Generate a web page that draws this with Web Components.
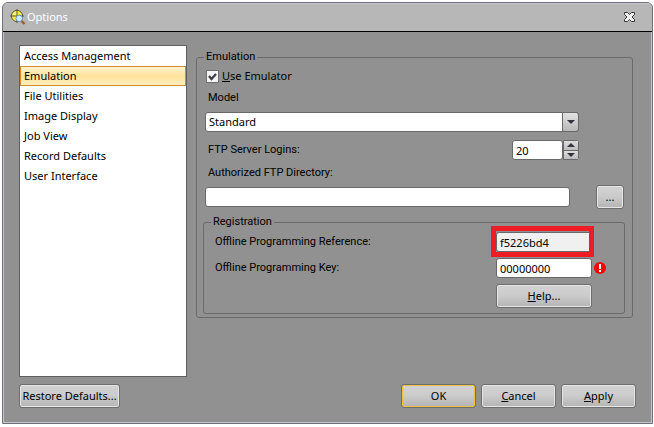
<!DOCTYPE html>
<html lang="en">
<head>
<meta charset="utf-8">
<title>Options</title>
<style>
    body {
        margin: 0;
        background: #fff;
        color: #000;
        font: 11px/16px "Noto Sans", "Open Sans", sans-serif;
    }
</style>
</head>
<body>
<options-dialog></options-dialog>

<script>
const baseStyle = `
    * {
        box-sizing: border-box;
        margin: 0;
    }
    input, select, button {
        font: inherit;
        color: inherit;
    }
    .caption {
        font-family: Roboto, "Liberation Sans", sans-serif;
    }
    .box {
        height: 20px;
        min-width: 0;
        padding: 0 3px;
        border: 1px solid #686868;
        border-radius: 3px;
        background: #fff;
        outline: none;
    }
`;

class ActionButton extends HTMLElement {
    constructor() {
        super();
        this.attachShadow({mode: "open"}).innerHTML = `
            <style>
                ${baseStyle}
                :host {
                    display: block;
                    width: 75px;
                }
                button {
                    display: block;
                    width: 100%;
                    height: 24px;
                    padding: 0;
                    border: 1px solid #6e6e6e;
                    border-radius: 3px;
                    background: linear-gradient(#d2d2d2, #cccccc 45%, #b4b4b4);
                    box-shadow: inset 0 0 0 1px #e6e6e6;
                    white-space: nowrap;
                }
                :host([default]) button {
                    box-shadow: inset 0 0 0 1px #f0c040;
                }
            </style>
            <button type="button"><slot></slot></button>`;
    }
}
customElements.define("action-button", ActionButton);

class GroupBox extends HTMLElement {
    constructor() {
        super();
        this.attachShadow({mode: "open"}).innerHTML = `
            <style>
                ${baseStyle}
                :host {
                    display: block;
                }
                fieldset {
                    min-width: 0;
                    padding: 0;
                    border: 1px solid #6a6a6a;
                    border-radius: 3px;
                }
                legend {
                    margin-left: 7px;
                    padding: 0 2px;
                }
            </style>
            <fieldset>
                <legend class="caption">${this.getAttribute("label")}</legend>
                <slot></slot>
            </fieldset>`;
    }
}
customElements.define("group-box", GroupBox);

class NavList extends HTMLElement {
    constructor() {
        super();
        const current = this.getAttribute("current");
        const items = this.getAttribute("items").split(",");
        this.attachShadow({mode: "open"}).innerHTML = `
            <style>
                ${baseStyle}
                :host {
                    display: block;
                    box-sizing: border-box;
                    border: 1px solid #5f5f5f;
                    background: #fff;
                }
                button {
                    display: block;
                    width: 100%;
                    height: 20px;
                    padding: 0 3px;
                    border: 1px solid transparent;
                    background: none;
                    text-align: left;
                }
                button[aria-current] {
                    border-color: #d68a2e;
                    background: linear-gradient(#fff3d0, #ffe29a 50%, #ffefbe);
                }
            </style>
            <nav>
                ${items.map(item => `<button type="button" ${item === current ? 'aria-current="true"' : ""}>${item}</button>`).join("")}
            </nav>`;
    }
}
customElements.define("nav-list", NavList);

class CheckField extends HTMLElement {
    constructor() {
        super();
        this.attachShadow({mode: "open"}).innerHTML = `
            <style>
                ${baseStyle}
                :host {
                    display: block;
                }
                label {
                    display: flex;
                    align-items: center;
                    gap: 3px;
                }
                input {
                    appearance: none;
                    width: 13px;
                    height: 13px;
                    border: 1px solid #707070;
                    background: #f4f4f4;
                }
                .tick {
                    display: grid;
                }
                .tick > * {
                    grid-area: 1 / 1;
                }
                svg {
                    pointer-events: none;
                }
                input:not(:checked) + svg {
                    display: none;
                }
            </style>
            <label>
                <span class="tick">
                    <input type="checkbox" checked>
                    <svg width="13" height="13" viewBox="0 0 13 13"><path d="M3 6 L5.5 9 L10 4" fill="none" stroke="#3c3c44" stroke-width="2.2"/></svg>
                </span>
                <span><slot></slot></span>
            </label>`;
    }
}
customElements.define("check-field", CheckField);

class ModelField extends HTMLElement {
    constructor() {
        super();
        this.attachShadow({mode: "open"}).innerHTML = `
            <style>
                ${baseStyle}
                :host {
                    display: block;
                }
                label {
                    display: block;
                    padding-left: 3px;
                    margin-bottom: 6px;
                }
                .combo {
                    display: grid;
                    grid-template-columns: 1fr 17px;
                }
                select {
                    grid-area: 1 / 1 / 2 / 3;
                    appearance: none;
                    width: 100%;
                }
                .arrow {
                    grid-area: 1 / 2;
                    display: flex;
                    align-items: center;
                    justify-content: center;
                    border: 1px solid #686868;
                    border-radius: 0 3px 3px 0;
                    background: linear-gradient(#e2e2e2, #b8b8b8);
                    pointer-events: none;
                }
            </style>
            <label class="caption" for="model">Model</label>
            <div class="combo">
                <select class="box" id="model"><option>Standard</option></select>
                <span class="arrow"><svg width="8" height="4"><path d="M0 0H8L4 4Z" fill="#33333b"/></svg></span>
            </div>`;
    }
}
customElements.define("model-field", ModelField);

class SpinField extends HTMLElement {
    constructor() {
        super();
        this.attachShadow({mode: "open"}).innerHTML = `
            <style>
                ${baseStyle}
                :host {
                    display: flex;
                    align-items: center;
                    justify-content: space-between;
                    padding-left: 3px;
                }
                .spin {
                    display: flex;
                    width: 67px;
                    height: 20px;
                }
                input {
                    flex: 1;
                    border-radius: 3px 0 0 3px;
                    border-right: 0;
                }
                .steps {
                    display: flex;
                    flex-direction: column;
                    width: 16px;
                    border: 1px solid #686868;
                    border-radius: 0 3px 3px 0;
                    background: #686868;
                    gap: 1px;
                }
                button {
                    flex: 1;
                    display: flex;
                    align-items: center;
                    justify-content: center;
                    min-height: 0;
                    padding: 0;
                    border: 0;
                    background: linear-gradient(#dedede, #bcbcbc);
                }
            </style>
            <label class="caption" for="logins">FTP Server Logins:</label>
            <div class="spin">
                <input class="box" id="logins" type="text" inputmode="numeric" value="20">
                <div class="steps">
                    <button type="button" aria-label="More"><svg width="8" height="4"><path d="M0 4H8L4 0Z" fill="#33333b"/></svg></button>
                    <button type="button" aria-label="Less"><svg width="8" height="4"><path d="M0 0H8L4 4Z" fill="#33333b"/></svg></button>
                </div>
            </div>`;
        const input = this.shadowRoot.querySelector("input");
        const [more, less] = this.shadowRoot.querySelectorAll("button");
        more.addEventListener("click", () => input.value = Number(input.value) + 1);
        less.addEventListener("click", () => input.value = Math.max(0, Number(input.value) - 1));
    }
}
customElements.define("spin-field", SpinField);

class PathField extends HTMLElement {
    constructor() {
        super();
        this.attachShadow({mode: "open"}).innerHTML = `
            <style>
                ${baseStyle}
                :host {
                    display: block;
                }
                label {
                    display: block;
                    padding-left: 3px;
                    margin-bottom: 4px;
                }
                .row {
                    display: flex;
                    align-items: center;
                    gap: 26px;
                }
                input {
                    flex: 1;
                }
                action-button {
                    width: 28px;
                }
            </style>
            <label class="caption" for="path">Authorized FTP Directory:</label>
            <div class="row">
                <input class="box" id="path" type="text">
                <action-button>...</action-button>
            </div>`;
    }
}
customElements.define("path-field", PathField);

class CodeField extends HTMLElement {
    constructor() {
        super();
        this.attachShadow({mode: "open"}).innerHTML = `
            <style>
                ${baseStyle}
                :host {
                    display: flex;
                    align-items: center;
                    justify-content: space-between;
                }
                .value {
                    position: relative;
                    width: 96px;
                }
                input {
                    display: block;
                    width: 100%;
                    padding: 0 2px;
                    border-color: #b4b4b4;
                    border-radius: 2px;
                }
                input[readonly] {
                    background: #f0f0f0;
                }
                /* frame around the marked value, drawn over its edges */
                :host([marked]) .value::after {
                    content: "";
                    position: absolute;
                    inset: -6px -2px -5px -5px;
                    border: 5px solid #ee1c25;
                    pointer-events: none;
                }
                svg {
                    position: absolute;
                    left: 98px;
                    top: 4px;
                }
                :host(:not([invalid])) svg {
                    display: none;
                }
            </style>
            <label class="caption" for="code">${this.getAttribute("label")}</label>
            <div class="value">
                <input class="box" id="code" type="text" value="${this.getAttribute("value")}" ${this.hasAttribute("marked") ? "readonly" : ""}>
                <svg width="12" height="12" viewBox="0 0 12 12">
                    <circle cx="6" cy="6" r="6" fill="#f00"/>
                    <path d="M5 2H7V7H5ZM5 8H7V10H5Z" fill="#fff"/>
                </svg>
            </div>`;
    }
}
customElements.define("code-field", CodeField);

class TitleBar extends HTMLElement {
    constructor() {
        super();
        this.attachShadow({mode: "open"}).innerHTML = `
            <style>
                ${baseStyle}
                :host {
                    box-sizing: border-box;
                    display: flex;
                    align-items: center;
                    height: 29px;
                    padding: 0 17px 0 7px;
                    border-bottom: 1px solid #000;
                    background: #b7b7b7;
                    box-shadow: inset 0 1px #c4c4cc;
                    color: #fff;
                }
                h1 {
                    flex: 1;
                    margin-left: 1px;
                    font: inherit;
                }
                svg {
                    display: block;
                }
                button {
                    padding: 0;
                    border: 0;
                    background: none;
                }
            </style>
            <svg width="16" height="16" viewBox="0 0 16 16">
                <circle cx="7" cy="7" r="5.6" fill="#ffee38" stroke="#5c5a3c"/>
                <path d="M7 0V14M0 7H14" stroke="#5c5a3c"/>
                <path d="M3.5 5.5L5.5 3.5M9 4L10.5 5" stroke="#fffbc0" stroke-width="1.5"/>
                <path d="M11.5 12L14.5 15" stroke="#a0582c" stroke-width="2.4"/>
                <circle cx="9.2" cy="9.4" r="3.3" fill="#c8ecff" stroke="#6b87b0"/>
            </svg>
            <h1>Options</h1>
            <button type="button" aria-label="Close">
                <svg width="11" height="10" viewBox="0 0 11 10">
                    <path d="M.5 .5H3.5L5.5 2.5L7.5 .5H10.5V2.5L8 5L10.5 7.5V9.5H7.5L5.5 7.5L3.5 9.5H.5V7.5L3 5L.5 2.5Z" fill="#f2f2f2" stroke="#3a3a3a"/>
                </svg>
            </button>`;
    }
}
customElements.define("title-bar", TitleBar);

class OptionsDialog extends HTMLElement {
    constructor() {
        super();
        this.attachShadow({mode: "open"}).innerHTML = `
            <style>
                ${baseStyle}
                :host {
                    box-sizing: border-box;
                    display: flex;
                    min-height: 100vh;
                    padding: 2px 1px 3px 2px;
                }
                .window {
                    flex: 1;
                    display: flex;
                    flex-direction: column;
                    border: 1px solid #70707c;
                    border-radius: 6px 6px 0 0;
                    background: #919191;
                    box-shadow: inset 0 0 0 1px #c4c4cc;
                    overflow: hidden;
                }
                form {
                    flex: 1;
                    display: flex;
                    flex-direction: column;
                    gap: 7px;
                    padding: 13px 16px 15px;
                }
                .main {
                    flex: 1;
                    display: flex;
                    gap: 9px;
                }
                nav-list {
                    width: 168px;
                }
                .settings {
                    flex: 1;
                    margin: 4px 3px 0 0;
                }
                .fields {
                    display: flex;
                    flex-direction: column;
                    padding: 3px 7px 3px 6px;
                }
                check-field {
                    margin: 0 3px 6px;
                }
                model-field, spin-field {
                    margin: 0 46px 8px 2px;
                }
                spin-field {
                    margin-bottom: 5px;
                }
                path-field {
                    margin: 0 1px 5px 2px;
                }
                .codes {
                    display: flex;
                    flex-direction: column;
                    gap: 6px;
                    padding: 2px 32px 5px 11px;
                }
                .codes action-button {
                    width: 96px;
                    align-self: flex-end;
                }
                footer {
                    display: flex;
                    gap: 5px;
                }
                .restore {
                    width: 101px;
                    margin-right: auto;
                }
            </style>
            <div class="window">
                <title-bar></title-bar>
                <form>
                    <div class="main">
                        <nav-list current="Emulation" items="Access Management,Emulation,File Utilities,Image Display,Job View,Record Defaults,User Interface"></nav-list>
                        <group-box class="settings" label="Emulation">
                            <div class="fields">
                                <check-field><u>U</u>se Emulator</check-field>
                                <model-field></model-field>
                                <spin-field></spin-field>
                                <path-field></path-field>
                                <group-box label="Registration">
                                    <div class="codes">
                                        <code-field marked label="Offline Programming Reference:" value="f5226bd4"></code-field>
                                        <code-field invalid label="Offline Programming Key:" value="00000000"></code-field>
                                        <action-button><u>H</u>elp...</action-button>
                                    </div>
                                </group-box>
                            </div>
                        </group-box>
                    </div>
                    <footer>
                        <action-button class="restore">Restore Defaults...</action-button>
                        <action-button default>OK</action-button>
                        <action-button><u>C</u>ancel</action-button>
                        <action-button><u>A</u>pply</action-button>
                    </footer>
                </form>
            </div>`;
    }
}
customElements.define("options-dialog", OptionsDialog);
</script>
</body>
</html>
